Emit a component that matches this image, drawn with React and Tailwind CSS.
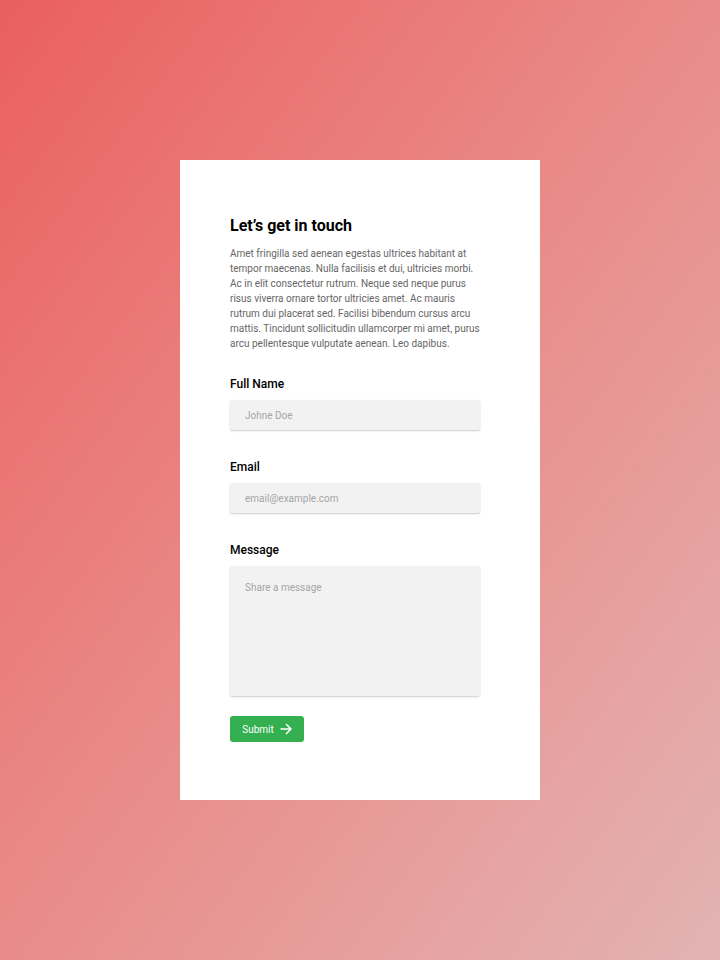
import React from 'react';

function Field({ label, children }) {
  return (
    <div className="flex flex-col">
      <label className="text-[12px] leading-[14px] font-medium text-black">{label}</label>
      <div className="mt-[9px]">{children}</div>
    </div>
  );
}

export default function App() {
  return (
    <div
      className="w-[720px] h-[960px] flex items-center justify-center bg-gradient-to-br from-[#ea5f5f] to-[#e2b3b3]"
      style={{ fontFamily: 'Roboto, "Liberation Sans", sans-serif' }}
    >
      <div className="w-[360px] h-[640px] bg-white pl-[50px] pr-[60px] pt-[56px]">
        <h1 className="text-[16px] leading-[20px] font-bold text-black">Let’s get in touch</h1>
        <p className="mt-[10px] text-[10px] leading-[15px] text-[#666666]">
          Amet fringilla sed aenean egestas ultrices habitant at tempor maecenas. Nulla facilisis et dui, ultricies morbi. Ac in elit consectetur rutrum. Neque sed neque purus risus viverra ornare tortor ultricies amet. Ac mauris rutrum dui placerat sed. Facilisi bibendum cursus arcu mattis. Tincidunt sollicitudin ullamcorper mi amet, purus arcu pellentesque vulputate aenean. Leo dapibus.
        </p>

        <form className="mt-[26px] flex flex-col gap-[30px]">
          <Field label="Full Name">
            <input
              placeholder="Johne Doe"
              className="w-full h-[30px] px-[15px] bg-[#f2f2f2] text-[10px] placeholder-[#a6a6a6] rounded-[2px] shadow-[0_1px_2px_rgba(0,0,0,0.2)] outline-none"
            />
          </Field>
          <Field label="Email">
            <input
              placeholder="email@example.com"
              className="w-full h-[30px] px-[15px] bg-[#f2f2f2] text-[10px] placeholder-[#a6a6a6] rounded-[2px] shadow-[0_1px_2px_rgba(0,0,0,0.2)] outline-none"
            />
          </Field>
          <Field label="Message">
            <textarea
              placeholder="Share a message"
              className="block w-full h-[130px] px-[15px] py-[15px] bg-[#f2f2f2] text-[10px] leading-[14px] placeholder-[#a6a6a6] rounded-[2px] shadow-[0_1px_2px_rgba(0,0,0,0.2)] outline-none resize-none"
            />
          </Field>
        </form>

        <button className="mt-[20px] w-[74px] h-[26px] flex items-center justify-center gap-[6px] bg-[#35b050] rounded-[3px] text-white text-[10px] font-normal">
          Submit
          <svg width="12" height="12" viewBox="0 0 12 12" fill="none" stroke="white" strokeWidth="1.5" strokeLinecap="round" strokeLinejoin="round">
            <path d="M1 6h10M6.5 1.5L11 6l-4.5 4.5" />
          </svg>
        </button>
      </div>
    </div>
  );
}
